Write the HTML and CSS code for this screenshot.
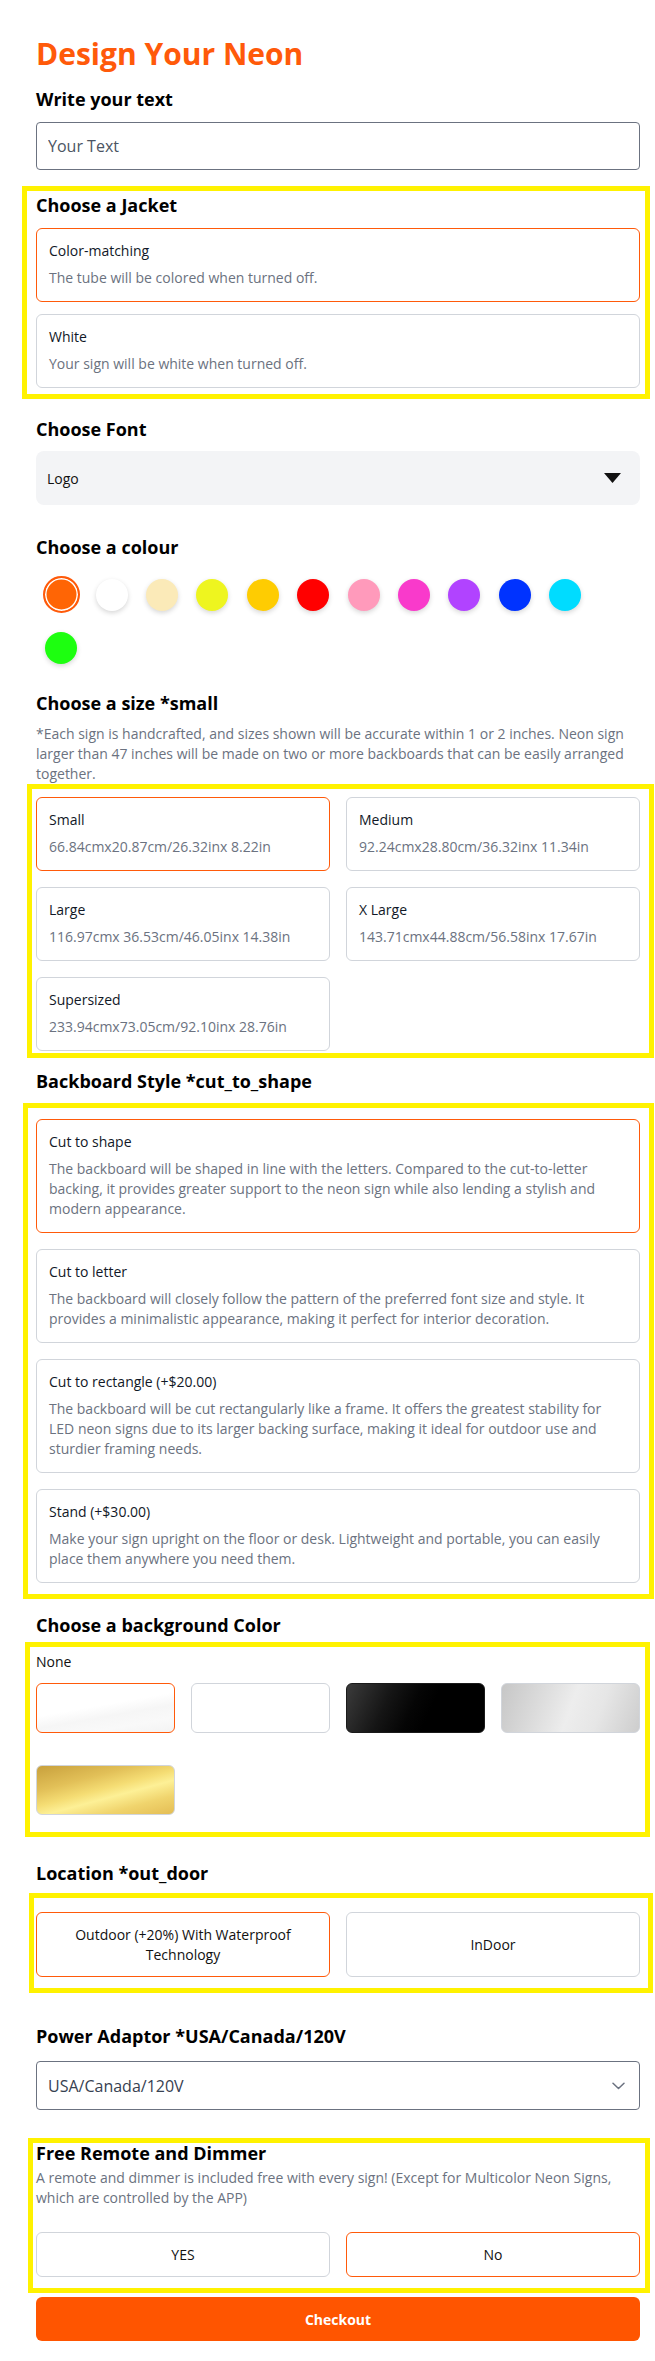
FILE: index.html
```html
<!DOCTYPE html>
<html lang="en">
<head>
<meta charset="utf-8">
<title>Design Your Neon</title>
<link rel="stylesheet" href="styles.css">
</head>
<body>
<main class="page">
  <h1 class="title">Design Your Neon</h1>

  <h2 class="heading heading--text">Write your text</h2>
  <input class="text-input" type="text" placeholder="Your Text">

  <section class="hl hl--jacket">
    <h2 class="heading">Choose a Jacket</h2>
    <div class="stack stack--jacket">
      <div class="card is-active">
        <div class="card-title">Color-matching</div>
        <div class="card-desc">The tube will be colored when turned off.</div>
      </div>
      <div class="card">
        <div class="card-title">White</div>
        <div class="card-desc">Your sign will be white when turned off.</div>
      </div>
    </div>
  </section>

  <h2 class="heading heading--font">Choose Font</h2>
  <div class="font-select">
    <span>Logo</span>
    <svg class="tri" width="17" height="10" viewBox="0 0 17 10"><path d="M0 0H17L8.5 10Z" fill="#111"/></svg>
  </div>

  <h2 class="heading heading--colour">Choose a colour</h2>
  <div class="dots">
    <div class="dot-item"><span class="dot dot--active" style="background:#ff6505"></span></div>
    <div class="dot-item"><span class="dot" style="background:#ffffff"></span></div>
    <div class="dot-item"><span class="dot" style="background:#fbeab8"></span></div>
    <div class="dot-item"><span class="dot" style="background:#eef51f"></span></div>
    <div class="dot-item"><span class="dot" style="background:#fecc02"></span></div>
    <div class="dot-item"><span class="dot" style="background:#ff0000"></span></div>
    <div class="dot-item"><span class="dot" style="background:#ff9abb"></span></div>
    <div class="dot-item"><span class="dot" style="background:#f93acb"></span></div>
    <div class="dot-item"><span class="dot" style="background:#b143ff"></span></div>
    <div class="dot-item"><span class="dot" style="background:#0033ff"></span></div>
    <div class="dot-item"><span class="dot" style="background:#00dcff"></span></div>
    <div class="dot-item"><span class="dot" style="background:#1dff10"></span></div>
  </div>

  <h2 class="heading heading--size">Choose a size *small</h2>
  <p class="note">*Each sign is handcrafted, and sizes shown will be accurate within 1 or 2 inches. Neon sign larger than 47 inches will be made on two or more backboards that can be easily arranged together.</p>

  <section class="hl hl--sizes">
    <div class="size-grid">
      <div class="card is-active">
        <div class="card-title">Small</div>
        <div class="card-desc">66.84cmx20.87cm/26.32inx 8.22in</div>
      </div>
      <div class="card">
        <div class="card-title">Medium</div>
        <div class="card-desc">92.24cmx28.80cm/36.32inx 11.34in</div>
      </div>
      <div class="card">
        <div class="card-title">Large</div>
        <div class="card-desc">116.97cmx 36.53cm/46.05inx 14.38in</div>
      </div>
      <div class="card">
        <div class="card-title">X Large</div>
        <div class="card-desc">143.71cmx44.88cm/56.58inx 17.67in</div>
      </div>
      <div class="card">
        <div class="card-title">Supersized</div>
        <div class="card-desc">233.94cmx73.05cm/92.10inx 28.76in</div>
      </div>
    </div>
  </section>

  <h2 class="heading heading--backboard">Backboard Style *cut_to_shape</h2>
  <section class="hl hl--backboard">
    <div class="stack">
      <div class="card is-active">
        <div class="card-title">Cut to shape</div>
        <div class="card-desc">The backboard will be shaped in line with the letters. Compared to the cut-to-letter backing, it provides greater support to the neon sign while also lending a stylish and modern appearance.</div>
      </div>
      <div class="card">
        <div class="card-title">Cut to letter</div>
        <div class="card-desc">The backboard will closely follow the pattern of the preferred font size and style. It provides a minimalistic appearance, making it perfect for interior decoration.</div>
      </div>
      <div class="card">
        <div class="card-title">Cut to rectangle (+$20.00)</div>
        <div class="card-desc">The backboard will be cut rectangularly like a frame. It offers the greatest stability for LED neon signs due to its larger backing surface, making it ideal for outdoor use and sturdier framing needs.</div>
      </div>
      <div class="card">
        <div class="card-title">Stand (+$30.00)</div>
        <div class="card-desc">Make your sign upright on the floor or desk. Lightweight and portable, you can easily place them anywhere you need them.</div>
      </div>
    </div>
  </section>

  <h2 class="heading heading--bg">Choose a background Color</h2>
  <section class="hl hl--bg">
    <div class="bg-label">None</div>
    <div class="bg-grid">
      <div class="bg-swatch bg-swatch--none is-active"></div>
      <div class="bg-swatch bg-swatch--white"></div>
      <div class="bg-swatch bg-swatch--black"></div>
      <div class="bg-swatch bg-swatch--silver"></div>
      <div class="bg-swatch bg-swatch--gold"></div>
    </div>
  </section>

  <h2 class="heading heading--location">Location *out_door</h2>
  <section class="hl hl--location">
    <div class="btn-grid">
      <div class="opt opt--tall is-active">Outdoor (+20%) With Waterproof<br>Technology</div>
      <div class="opt opt--tall">InDoor</div>
    </div>
  </section>

  <h2 class="heading heading--power">Power Adaptor *USA/Canada/120V</h2>
  <div class="power-select">
    <span>USA/Canada/120V</span>
    <svg class="chev" width="13" height="8" viewBox="0 0 13 8"><path d="M1 1.2L6.5 6.5L12 1.2" fill="none" stroke="#6b7280" stroke-width="1.5" stroke-linecap="round" stroke-linejoin="round"/></svg>
  </div>

  <section class="hl hl--remote">
    <h2 class="heading heading--remote">Free Remote and Dimmer</h2>
    <p class="remote-desc">A remote and dimmer is included free with every sign! (Except for Multicolor Neon Signs, which are controlled by the APP)</p>
    <div class="btn-grid btn-grid--remote">
      <div class="opt opt--short">YES</div>
      <div class="opt opt--short is-active">No</div>
    </div>
  </section>

  <button class="checkout" type="button">Checkout</button>
</main>
</body>
</html>
```

FILE: styles.css
```css
* { box-sizing: border-box; }

html, body {
  margin: 0;
  padding: 0;
  background: #ffffff;
}

body {
  font-family: "Open Sans", "Noto Sans", "Liberation Sans", sans-serif;
  color: #111111;
}

.page {
  width: 604px;
  margin-left: 36px;
  padding-bottom: 20px;
}

.title {
  margin: 36px 0 0;
  font-size: 30px;
  line-height: 36px;
  font-weight: 700;
  color: #ff5a0a;
}

.heading {
  margin: 0;
  font-size: 18px;
  line-height: 28px;
  font-weight: 700;
  color: #000000;
}

.heading--text { margin-top: 13px; }
.heading--font { margin-top: 16px; }
.heading--colour { margin-top: 28px; }
.heading--size { margin-top: 15px; }
.heading--backboard { margin-top: 9px; }
.heading--bg { margin-top: 12px; }
.heading--location { margin-top: 22px; }
.heading--power { margin-top: 29px; }
.heading--remote { line-height: 20px; }

.text-input {
  display: block;
  width: 100%;
  height: 48px;
  margin-top: 9px;
  padding: 0 11px;
  border: 1px solid #6b7280;
  border-radius: 4px;
  font-family: inherit;
  font-size: 16px;
  color: #111;
  background: #fff;
  outline: none;
}
.text-input::placeholder { color: #4b5563; opacity: 1; }

/* yellow highlight boxes */
.hl {
  --l: 14px;
  --r: 10px;
  border: 5px solid #fff200;
  margin-left: calc(-1 * var(--l));
  margin-right: calc(-1 * var(--r));
  padding-left: calc(var(--l) - 5px);
  padding-right: calc(var(--r) - 5px);
}
.hl--jacket { --l: 14px; --r: 10px; margin-top: 16px; padding-bottom: 6px; }
.hl--sizes { --l: 9px; --r: 14px; margin-top: 0; padding-top: 8px; padding-bottom: 2px; }
.hl--backboard { --l: 13px; --r: 14px; margin-top: 8px; padding-top: 11px; padding-bottom: 11px; }
.hl--bg { --l: 11px; --r: 10px; margin-top: 3px; padding-top: 5px; padding-bottom: 17px; }
.hl--location { --l: 7px; --r: 13px; margin-top: 6px; padding-top: 14px; padding-bottom: 11px; }
.hl--remote { --l: 8px; --r: 10px; margin-top: 28px; padding-top: 0; padding-bottom: 11px; }

/* cards */
.stack {
  display: flex;
  flex-direction: column;
  gap: 16px;
}
.stack--jacket { margin-top: 9px; gap: 12px; }

.card {
  border: 1px solid #d1d5db;
  border-radius: 6px;
  padding: 12px 12px 13px;
  background: #fff;
}
.card.is-active { border-color: #ff5a0a; }

.card-title {
  font-size: 14px;
  line-height: 20px;
  font-weight: 500;
  color: #111827;
}
.card-desc {
  margin-top: 7px;
  font-size: 14px;
  line-height: 20px;
  color: #6b7280;
}

.font-select {
  margin-top: 8px;
  height: 54px;
  border-radius: 8px;
  background: #f3f4f6;
  display: flex;
  align-items: center;
  justify-content: space-between;
  padding: 0 19px 0 11px;
  font-size: 14px;
  color: #111;
}
.tri { display: block; }

/* colour dots */
.dots {
  display: flex;
  flex-wrap: wrap;
  margin-top: 7px;
}
.dot-item {
  width: 50.4px;
  height: 53px;
  display: flex;
  align-items: center;
  justify-content: center;
}
.dot {
  display: block;
  width: 32px;
  height: 32px;
  border-radius: 50%;
  box-shadow: 0 2px 5px rgba(0, 0, 0, 0.16);
}
.dot--active {
  width: 37px;
  height: 37px;
  border: 2px solid #ff5a0a;
  box-shadow: inset 0 0 0 1.5px #ffffff;
}

.note {
  margin: 7px 0 0;
  font-size: 14px;
  line-height: 20px;
  color: #6b7280;
}

.size-grid {
  display: grid;
  grid-template-columns: 1fr 1fr;
  gap: 16px;
}

/* background colours */
.bg-label {
  font-size: 14px;
  line-height: 20px;
  color: #111;
}
.bg-grid {
  margin-top: 11px;
  display: grid;
  grid-template-columns: repeat(4, 1fr);
  column-gap: 16px;
  row-gap: 32px;
}
.bg-swatch {
  height: 50px;
  border-radius: 6px;
  border: 1px solid #d1d5db;
}
.bg-swatch--none {
  background: linear-gradient(170deg, #ffffff 0%, #ffffff 45%, #f6f6f6 62%, #f9f9f9 80%, #f3f3f3 100%);
}
.bg-swatch.is-active { border-color: #ff5a0a; }
.bg-swatch--white { background: #ffffff; }
.bg-swatch--black {
  border-color: #1a1a1a;
  background: linear-gradient(115deg, #3b3b3b 0%, #151515 30%, #050505 48%, #000000 60%, #000000 100%);
}
.bg-swatch--silver {
  background: linear-gradient(110deg, #c6c6c6 0%, #dddddd 30%, #ededed 50%, #e6e6e6 70%, #cdcdcd 100%);
}
.bg-swatch--gold {
  background: linear-gradient(165deg, #c8a03c 0%, #e2c058 30%, #f5dd74 48%, #fdf096 60%, #f0d46d 78%, #e4bd54 100%);
}

/* option buttons */
.btn-grid {
  display: grid;
  grid-template-columns: 1fr 1fr;
  gap: 16px;
}
.btn-grid--remote { margin-top: 24px; }

.opt {
  border: 1px solid #d1d5db;
  border-radius: 6px;
  display: flex;
  align-items: center;
  justify-content: center;
  text-align: center;
  font-size: 14px;
  line-height: 20px;
  font-weight: 500;
  color: #111;
  background: #fff;
}
.opt.is-active { border-color: #ff5a0a; }
.opt--tall { min-height: 65px; padding: 11px 12px; }
.opt--short { height: 45px; }

.power-select {
  margin-top: 11px;
  height: 49px;
  border: 1px solid #6b7280;
  border-radius: 4px;
  display: flex;
  align-items: center;
  justify-content: space-between;
  padding: 0 14px 0 11px;
  font-size: 16px;
  color: #374151;
}
.chev { display: block; }

.remote-desc {
  margin: 5px 0 0;
  font-size: 14px;
  line-height: 20px;
  color: #6b7280;
}

.checkout {
  display: block;
  width: 100%;
  height: 44px;
  margin-top: 4px;
  border: none;
  border-radius: 6px;
  background: #ff5500;
  color: #ffffff;
  font-family: inherit;
  font-size: 14px;
  font-weight: 700;
}
```
